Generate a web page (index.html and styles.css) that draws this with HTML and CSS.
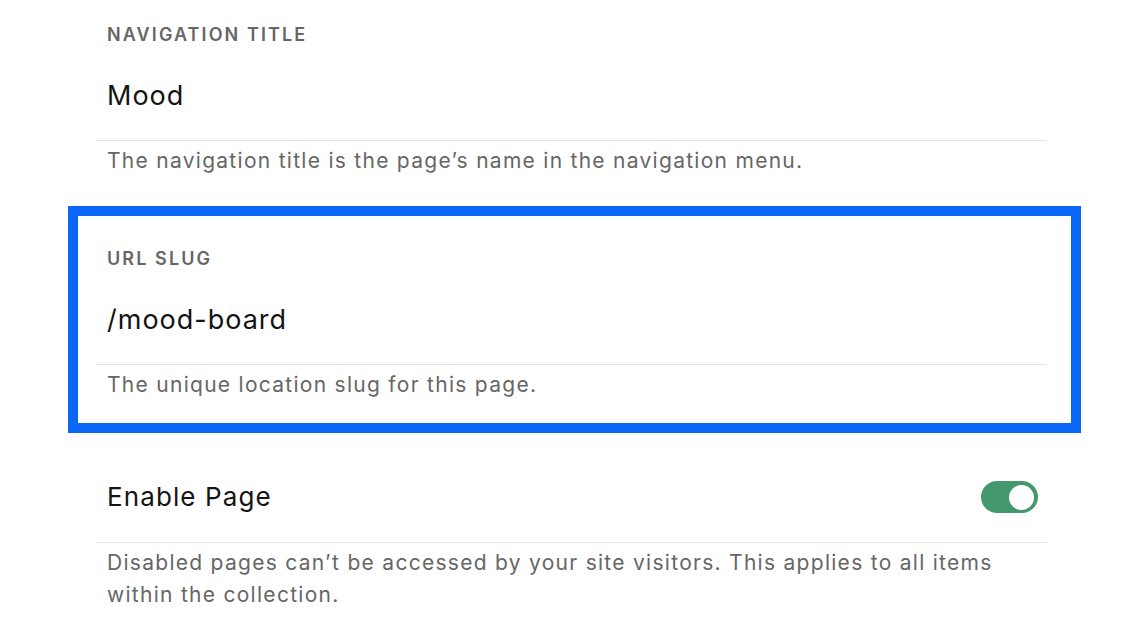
FILE: index.html
```html
<!DOCTYPE html>
<html lang="en">
<head>
<meta charset="utf-8">
<title>Page settings</title>
<link rel="stylesheet" href="styles.css">
</head>
<body>
<main class="settings">
  <section class="field field-first">
    <div class="field-label">NAVIGATION TITLE</div>
    <div class="field-value">Mood</div>
    <p class="field-desc">The navigation title is the page’s name in the navigation menu.</p>
  </section>

  <section class="field field-highlight">
    <div class="field-label">URL SLUG</div>
    <div class="field-value">/mood-board</div>
    <p class="field-desc">The unique location slug for this page.</p>
  </section>

  <section class="toggle-field">
    <div class="toggle-row">
      <span class="toggle-label">Enable Page</span>
      <span class="switch" role="switch" aria-checked="true"><span class="knob"></span></span>
    </div>
    <p class="field-desc">Disabled pages can’t be accessed by your site visitors. This applies to all items within the collection.</p>
  </section>
</main>
</body>
</html>
```

FILE: styles.css
```css
html, body {
  margin: 0;
  padding: 0;
  background: #ffffff;
}

body {
  font-family: Inter, "Noto Sans", "Liberation Sans", sans-serif;
  color: #111111;
}

.settings {
  width: 951px;
  margin-left: 96px;
}

.field {
  display: flex;
  flex-direction: column;
}

.field-first {
  padding-top: 23px;
}

.field-label {
  padding-left: 11px;
  font-size: 18px;
  line-height: 24px;
  font-weight: 600;
  letter-spacing: 2.1px;
  color: #666666;
}

.field-value {
  margin-top: 33px;
  padding: 0 11px 28px;
  font-size: 27px;
  line-height: 32px;
  letter-spacing: 1px;
  color: #141414;
  border-bottom: 1px solid #e4e4e4;
}

.field-desc {
  margin: 4px 0 0;
  padding: 0 11px;
  font-size: 21px;
  line-height: 32px;
  letter-spacing: 1.28px;
  color: #666666;
}

.field-highlight {
  margin: 29px -34px 0 -28px;
  padding: 31px 24px 22px 18px;
  border: 10px solid #0a66f5;
}

.toggle-field {
  display: flex;
  flex-direction: column;
}

.toggle-row {
  display: flex;
  align-items: center;
  justify-content: space-between;
  padding: 48px 9px 29px 11px;
  border-bottom: 1px solid #e4e4e4;
}

.toggle-label {
  font-size: 26px;
  line-height: 32px;
  letter-spacing: 1.1px;
  color: #141414;
}

.switch {
  position: relative;
  display: inline-flex;
  align-items: center;
  justify-content: flex-end;
  width: 57px;
  height: 32px;
  padding: 0 4px;
  box-sizing: border-box;
  border-radius: 16px;
  background: #43996d;
}

.knob {
  width: 25px;
  height: 25px;
  border-radius: 50%;
  background: #ffffff;
}
```
